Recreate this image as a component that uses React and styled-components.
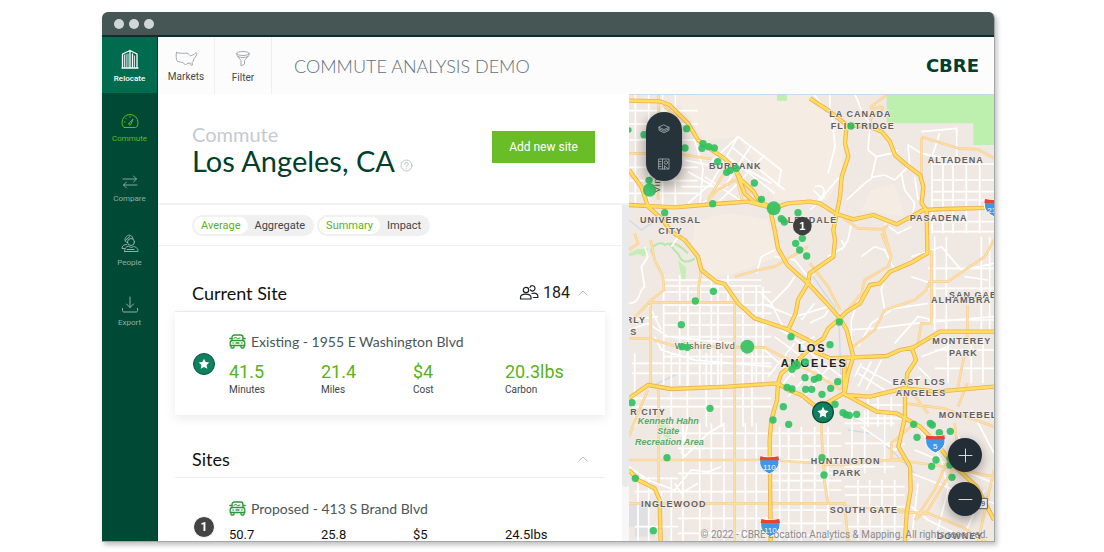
import React from "react";
import styled, { createGlobalStyle } from "styled-components";

const GlobalStyle = createGlobalStyle`
  * {
    box-sizing: border-box;
  }

  body {
    margin: 0;
    background-color: #fff;
    font-family: Roboto, "Liberation Sans", sans-serif;
    color: #3b464b;
  }

  button {
    font-family: inherit;
    border: none;
    padding: 0;
    cursor: pointer;
  }

  h1, h2, h3, p, dl, dd, dt {
    margin: 0;
    font-weight: 400;
  }
`;

const display = `Lato, "Open Sans", sans-serif`;

const Page = styled.div`
  height: 100vh;
  padding: 12px 109px 10px 102px;
`;

const Window = styled.div`
  height: 100%;
  display: flex;
  flex-direction: column;
  overflow: hidden;
  border-radius: 6px 6px 0 0;
  border-right: 1px solid #a3a7a7;
  border-bottom: 1px solid #a3a7a7;
  box-shadow: 2px 3px 5px rgba(0, 0, 0, 0.25);
`;

const TitleBar = styled.div`
  flex: none;
  height: 25px;
  display: flex;
  align-items: center;
  gap: 5px;
  padding: 0 12px;
  background-color: #455654;
  border-bottom: 2px solid #0c2e2c;
`;

const WindowDot = styled.span`
  width: 10px;
  height: 10px;
  border-radius: 50%;
  background-color: #d0d7da;
`;

const Body = styled.div`
  flex: 1;
  min-height: 0;
  display: flex;
`;

const Sidebar = styled.nav`
  flex: none;
  width: 56px;
  display: flex;
  flex-direction: column;
  gap: 5px;
  background-color: #004a35;
  border-right: 1px solid #003a2a;
`;

const SideLink = styled.a`
  height: 56px;
  display: flex;
  flex-direction: column;
  align-items: center;
  justify-content: center;
  gap: 4px;
  font-size: 8px;
  line-height: 12px;
  text-decoration: none;
  padding-top: ${(props) => (props.$tone === "solid" ? "4px" : "6px")};
  color: ${(props) =>
    ({ solid: "#fff", active: "#62bb1c" })[props.$tone] || "#8fb0a6"};
  background-color: ${(props) =>
    props.$tone === "solid" ? "#006b4e" : "transparent"};
  font-weight: ${(props) => (props.$tone === "solid" ? 500 : 400)};
`;

const Main = styled.div`
  flex: 1;
  min-width: 0;
  display: flex;
  flex-direction: column;
  background-color: #fff;
`;

const Header = styled.header`
  flex: none;
  height: 57px;
  display: flex;
  align-items: center;
  padding-right: 15px;
  background-color: #fcfcfc;
`;

const HeaderButton = styled.button`
  width: 57px;
  height: 100%;
  display: flex;
  flex-direction: column;
  align-items: center;
  justify-content: center;
  gap: 4px;
  padding-top: 3px;
  background: none;
  border-right: 1px solid #eeeff3;
  color: #3f484c;
  font-size: 10px;
  line-height: 12px;
`;

const AppTitle = styled.h1`
  flex: 1;
  margin-left: 22px;
  font-family: ${display};
  font-size: 18px;
  font-weight: 300;
  line-height: 24px;
  color: #5d707e;
`;

const Logo = styled.span`
  font-family: "DejaVu Sans", sans-serif;
  font-weight: 700;
  font-size: 18px;
  line-height: 20px;
  color: #003f2d;
`;

const Split = styled.div`
  flex: 1;
  min-height: 0;
  display: flex;
`;

const Panel = styled.section`
  flex: 471;
  min-width: 0;
  display: flex;
  flex-direction: column;
`;

const PanelHead = styled.div`
  flex: none;
  height: 111px;
  display: flex;
  align-items: center;
  justify-content: space-between;
  padding: 0 34px;
  border-bottom: 2px solid #f2f2f6;
`;

const Eyebrow = styled.p`
  font-family: ${display};
  font-size: 20px;
  line-height: 24px;
  color: #c5cacf;
`;

const City = styled.h2`
  display: flex;
  align-items: flex-end;
  gap: 5px;
  font-family: ${display};
  font-size: 29px;
  line-height: 30px;
  color: #003f2d;
`;

const HelpButton = styled.button`
  height: 20px;
  background: none;
  color: #bcc2c6;
  line-height: 0;
`;

const AddButton = styled.button`
  width: 103px;
  height: 32px;
  margin-bottom: 3px;
  background-color: #69be28;
  color: #fff;
  font-size: 12px;
`;

const ScrollArea = styled.div`
  flex: 1;
  min-height: 0;
  display: flex;
`;

const List = styled.div`
  flex: 1;
  min-width: 0;
  overflow: hidden;
`;

const ScrollTrack = styled.div`
  width: 7px;
  background-color: #f7f7f8;
`;

const ScrollThumb = styled.div`
  height: 84%;
  border-radius: 0 0 4px 4px;
  background-color: #e8eaec;
`;

const Toggles = styled.div`
  height: 41px;
  display: flex;
  align-items: center;
  gap: 3px;
  padding: 0 34px;
  border-bottom: 1px solid #f0f1f5;
`;

const ToggleGroup = styled.div`
  height: 21px;
  display: flex;
  padding: 2px;
  border-radius: 11px;
  background-color: #f0f0f0;
`;

const Toggle = styled.button`
  padding: 0 7px;
  border-radius: 9px;
  font-size: 11px;
  background-color: ${(props) => (props.$on ? "#fff" : "transparent")};
  color: ${(props) => (props.$on ? "#58b31a" : "#3b464b")};
`;

const SiteGroup = styled.section`
  padding: 0 17px;
  margin-top: ${(props) => props.$top}px;
`;

const GroupHead = styled.div`
  height: 38px;
  display: flex;
  align-items: center;
  padding: 0 17px;
  border-bottom: 1px solid #eceef4;
`;

const GroupTitle = styled.h3`
  flex: 1;
  font-family: ${display};
  font-size: 18px;
  line-height: 24px;
  color: #111;
`;

const Count = styled.span`
  display: flex;
  align-items: center;
  gap: 4px;
  margin-right: 8px;
  font-size: 16px;
  line-height: 24px;
  color: #1c2123;
`;

const CollapseButton = styled.button`
  background: none;
  color: #b4bac0;
  line-height: 0;
`;

const SiteCard = styled.article`
  height: ${(props) => (props.$raised ? 103 : 97)}px;
  display: flex;
  align-items: center;
  gap: 14px;
  padding-left: 18px;
  background-color: #fff;
  box-shadow: ${(props) =>
    props.$raised ? "0 3px 10px rgba(40, 50, 60, 0.1)" : "none"};
`;

const Badge = styled.span`
  flex: none;
  width: 22px;
  height: 22px;
  display: flex;
  align-items: center;
  justify-content: center;
  border-radius: 50%;
  font-size: 12px;
  font-weight: 700;
  color: #fff;
  border: 1px solid ${(props) => (props.$star ? "#07563f" : "#fff")};
  background-color: ${(props) => (props.$star ? "#0f8060" : "#444")};
`;

const SiteInfo = styled.div`
  flex: 1;
`;

const SiteName = styled.p`
  display: flex;
  align-items: center;
  gap: 5px;
  font-family: ${display};
  font-size: 14px;
  line-height: 20px;
  color: #4a565c;
`;

const Stats = styled.dl`
  display: grid;
  grid-template-columns: repeat(4, 92px);
  margin-top: 8px;
`;

const Stat = styled.div`
  display: flex;
  flex-direction: column-reverse;
`;

const StatValue = styled.dd`
  font-size: ${(props) => (props.$raised ? 18 : 13)}px;
  line-height: ${(props) => (props.$raised ? 24 : 16)}px;
  color: ${(props) => (props.$raised ? "#58b31a" : "#111")};
`;

const StatLabel = styled.dt`
  font-size: 10px;
  line-height: 12px;
`;

const MapPanel = styled.section`
  flex: 365;
  min-width: 0;
  position: relative;
  overflow: hidden;
  background-color: #f0e8e2;
`;

const MapSvg = styled.svg`
  display: block;
  width: 100%;
  height: 100%;
  font-family: "Liberation Sans", Arial, sans-serif;
`;

const LayerPill = styled.div`
  position: absolute;
  top: 18px;
  left: 17px;
  width: 36px;
  height: 69px;
  display: flex;
  flex-direction: column;
  border-radius: 18px;
  background-color: #26333a;
  box-shadow: 0 5px 14px rgba(0, 0, 0, 0.4);
`;

const LayerButton = styled.button`
  flex: 1;
  background: none;
  color: #98a2a7;
  line-height: 0;
`;

const ZoomControls = styled.div`
  position: absolute;
  right: 12px;
  bottom: 25px;
  display: flex;
  flex-direction: column;
  gap: 10px;
`;

const ZoomButton = styled.button`
  width: 34px;
  height: 34px;
  border-radius: 50%;
  background-color: #222d35;
  color: #d6dadc;
  line-height: 0;
  box-shadow: 0 4px 12px rgba(0, 0, 0, 0.35);
`;

const Attribution = styled.p`
  position: absolute;
  right: 6px;
  bottom: 0;
  font-size: 10px;
  line-height: 12px;
  white-space: nowrap;
  color: #8a8b94;
`;

const Icon = ({ w, h, children, ...rest }) => (
  <svg
    width={w}
    height={h}
    viewBox={`0 0 ${w} ${h}`}
    fill="none"
    stroke="currentColor"
    strokeLinecap="round"
    strokeLinejoin="round"
    aria-hidden="true"
    {...rest}
  >
    {children}
  </svg>
);

const BuildingIcon = () => (
  <Icon w={18} h={20}>
    <path d="M1.500 19V5L9 1.500V19M9 1.500l7 3.500V19M11.500 5v14M1 19h16" strokeWidth="1.300" />
    <path d="M3.500 6v12M5.200 5.500v12.500M7 5v13M13.500 7v11" strokeWidth=".8" />
  </Icon>
);

const GaugeIcon = () => (
  <Icon w={18} h={16}>
    <path d="M3.500 14.500h11c1.500 0 2.500-2.500 2.500-5a8 8 0 0 0-16 0c0 2.500 1 5 2.500 5zM8 10.500l4-4.500-2.200 5.500c-.8 1.200-2.600.2-1.800-1zM3.500 9h.6M5 5.500l.4.400M9 3.500v.6" />
  </Icon>
);

const CompareIcon = () => (
  <Icon w={16} h={14}>
    <path d="M1 4h13.500M11.500 1l3 3-3 3M15 10H1.500M4.500 7l-3 3 3 3" strokeWidth=".9" />
  </Icon>
);

const PeopleIcon = () => (
  <Icon w={18} h={19}>
    <circle cx="10" cy="8" r="3.500" />
    <path d="M6.300 8.500C3.500 8 3.500 5 5 3c1.500-2 4.500-2.500 6-.5l1 2.300M4.200 6.500L9 2.500M5.500 10.500C2.500 10.500 1 12 1 14.500h2.500M3.500 17.500h13.500c.3-2-1-4.500-4.500-5-2 1.500-4 1-5-.5-2.500.5-4 2.500-4 5.500zM6 15.500h7" />
  </Icon>
);

const ExportIcon = () => (
  <Icon w={18} h={17}>
    <path d="M9 1v10.500M5.500 8L9 11.500 12.500 8M1.500 12.500v2c0 1 .5 1.500 1.500 1.500h12c1 0 1.500-.5 1.500-1.500v-2" />
  </Icon>
);

const MarketsIcon = () => (
  <Icon w={23} h={16} stroke="#a3a9ae">
    <path d="M1.500 1.500C4 2.500 9 2.500 12 2l2 1.500 1.500 1.500 2-1 1.500-.500 2-2 1 1-1 2.500-2 2.500-.5 2.500-1.500 1.500.5 2.500-1 .5-1.500-2.500-3 .5-1.500 1.500-2-2-3-1-3-.5C1.500 9 .5 5 1.500 1.500z" />
  </Icon>
);

const FilterIcon = () => (
  <Icon w={16} h={18} stroke="#a3a9ae">
    <ellipse cx="8" cy="3.500" rx="6.300" ry="2" />
    <path d="M1.700 3.500l.3 2 4 5v5.500l3.500-2v-3.500l4.300-5 .5-2M3 6.500c3 1.500 7 1.500 10 0" />
  </Icon>
);

const HelpIcon = () => (
  <Icon w={13} h={13}>
    <circle cx="6.500" cy="6.500" r="5.500" />
    <path d="M4.700 5.200c0-2.600 3.800-2.300 3.600 0C8.200 6.500 6.500 6.500 6.500 8M6.500 9.700v.1" />
  </Icon>
);

const CountIcon = () => (
  <Icon w={20} h={17} strokeWidth="1.200">
    <circle cx="7" cy="6" r="2.700" />
    <path d="M1.500 15v-1.500c0-4.500 10.500-4.500 10.500 0V15zM11 3.500c.5-2.500 5-2.500 5 .8 0 3-3 3.500-4.500 1.700M13 9.500c3.500-1 5.800.5 5.800 2.500V13.500h-4.500" />
  </Icon>
);

const ChevronIcon = () => (
  <Icon w={10} h={6}>
    <path d="M.8 5L5 1l4.200 4" />
  </Icon>
);

const CarIcon = () => (
  <Icon w={17} h={15} stroke="#2c9a36" strokeWidth="1.300">
    <path d="M3 6.500V3.500C3 2 4 1 5.500 1h6C13 1 14 2 14 3.500v3" />
    <path d="M3.500 6.500h10c1.500 0 2.300.8 2.300 2.300V11.500H1.200V8.800c0-1.500.8-2.300 2.300-2.300z" />
    <path d="M2 11.500v1.700c0 .5.300.8.800.8h1.400c.5 0 .8-.3.800-.8V11.500M12 11.500v1.700c0 .5.300.8.800.8h1.400c.5 0 .8-.3.800-.8V11.500M.8 4.500H3M14 4.500h2.200M7 9h3M4 9h.3M12.700 9h.3" />
    <path d="M5 4.200l2-.7 1.500 1.200L11 4" strokeWidth="1" />
  </Icon>
);

const StarIcon = () => (
  <Icon w={12} h={12} fill="#fff" stroke="none">
    <path d="M6 .8l1.600 3.300 3.700.5-2.700 2.500.7 3.700L6 9l-3.300 1.800.7-3.700L.7 4.600l3.700-.5z" />
  </Icon>
);

const LayersIcon = () => (
  <Icon w={12} h={10} strokeWidth=".9">
    <path d="M6 1l5 2.300L6 5.600 1 3.300zM1 3.300v3L6 8.800l5-2.500v-3M1.500 5L6 7.200 10.500 5" />
  </Icon>
);

const LegendIcon = () => (
  <Icon w={12} h={12} strokeWidth=".9">
    <path d="M1 1h10v10H1zM4.500 1v10M1 3.500h2M1 6h2M1 8.500h2M6.500 8l4 3M6.500 11v-3" />
    <circle cx="8" cy="4.500" r="1.700" />
  </Icon>
);

const PlusIcon = () => (
  <Icon w={15} h={15}>
    <path d="M7.500 1v13M1 7.500h13" />
  </Icon>
);

const MinusIcon = () => (
  <Icon w={15} h={3}>
    <path d="M1 1.500h13" />
  </Icon>
);

// Street grids, one entry per district: x range, y range, verticals, horizontals
const grids = [
  [3, 210, 12, 350, [22, 62, 104, 142], [62, 102, 150, 232, 272, 310]],
  [104, 430, 590, 885, [107, 155, 180, 215, 250, 270, 345, 385, 405], [606, 645, 670, 705, 740, 800]],
  [107, 400, 555, 640, [107, 155, 250, 300], [588, 570]],
  [12, 430, 790, 1010, [20, 130, 178, 235, 280, 345, 372], [820, 850, 925, 950]],
  [150, 420, 1000, 1353, [165, 215, 250, 288, 352, 385], [1030, 1075, 1110, 1150, 1205, 1240, 1285, 1330]],
  [430, 640, 1010, 1353, [455, 482, 520, 560, 600], [1030, 1068, 1110, 1150, 1172, 1200, 1260, 1300, 1335]],
  [650, 830, 1170, 1353, [690, 725, 762, 800], [1190, 1215, 1250, 1310]],
  [912, 1098, 200, 430, [912, 945, 975, 1015, 1055], [222, 270, 305, 330, 395, 425]],
  [900, 1098, 440, 720, [920, 955, 1060, 1085], [535, 595, 690]],
  [920, 1098, 740, 880, [960, 1030, 1065], [780, 835]],
  [650, 800, 960, 1150, [672, 710, 770], [1000, 1060, 1130]],
  [700, 830, 920, 1010, [720, 750, 790], [945, 985]],
  [20, 150, 1160, 1353, [30, 62, 130], [1165, 1205, 1310]],
];

const gridPath = grids
  .map(([x1, x2, y1, y2, xs, ys]) =>
    [
      ...xs.map((x) => `M${x} ${y1}V${y2}`),
      ...ys.map((y) => `M${x1} ${y}H${x2}`),
    ].join("")
  )
  .join("");

const streets = [
  "M180 340L250 280 330 140 M210 350L290 290 370 165 M255 350L320 290 410 195 M240 225L330 140 460 240 450 290 M270 190L430 280 M230 260L350 340 M310 170L470 300 M300 200L440 310",
  "M170 210L240 225 M180 245L260 290 M160 290H300 M200 150L225 235 215 350",
  "M556 12L612 80 621 170 600 250 M606 12V60 M556 300L580 325 626 270 650 250 M546 360L590 320 M560 290C590 280 600 310 570 330",
  "M656 330L710 280 730 265 745 200 720 180 725 120 M730 262L770 255 800 270 840 230 M745 200L790 190 810 180 M820 250L830 300 860 340 850 390 M845 225L840 165 880 190 1000 215 M880 125L986 115V200 M935 130L912 200",
  "M680 12C700 50 700 80 730 100 M860 260L870 330 M770 400L810 430 850 410 M670 400L660 450 640 480",
  "M3 640C40 640 30 600 50 590L40 530 60 500 50 470 M130 470L150 440 175 450 M60 640L100 720 M3 720L60 700 120 740 320 760 M3 690L90 680 M80 740L100 780 200 810 430 830",
  "M385 550L400 500 440 480 M400 610L430 640 470 720 M430 640L480 590 500 560 M440 500L500 510 540 560 M560 640L520 690 M600 500L650 470 640 450 M546 700C570 680 590 690 600 660",
  "M400 640L500 680 600 650 M430 700L520 760 560 740 M410 780L500 860 M440 740L520 800 600 870 M470 720L560 800 640 860 M420 860L500 760 M450 900L540 790 M480 920L590 800 M520 930L620 810",
  "M700 500L740 470 770 480 800 540 M700 600L670 690V760 M790 660L730 700 690 770 M770 560L760 600 770 660 900 640 M650 720L740 715 860 700 1098 680 M800 760L870 680 920 690",
  "M700 820L680 860 M700 830L790 880 M730 815L690 890 M760 810L715 900 M690 850L770 900 M880 800L960 770 M870 830L920 880 M880 860L830 880",
  "M850 560L910 580 M850 500L940 470 1000 540 1098 520 M1010 560L1080 570",
  "M160 1080L170 1100 240 1030 290 1000 M3 1130L60 1170 140 1200 190 1140 240 1145 280 1130 M140 1180L160 1210 210 1180 M100 1210V1353 M180 1000L160 1090",
  "M860 1080L1098 1180 M850 1150L980 1200 1098 1240 M870 1010L940 1110 960 1200 920 1353 M980 1020L1040 1130 M1030 960L1098 1090 M850 1250L900 1290 1000 1340 M700 1010L800 1080 830 1060 M870 1180L850 1353 M640 960L720 1000 M1000 1353L1070 1200",
];

const arterials = [
  "M3 190H140L250 207 M92 12V60L90 330 M104 45L150 85",
  "M300 230L240 330 270 300 320 270 370 310 M330 280L345 340",
  "M68 450L80 510 105 560 108 600 70 630 3 700 M68 630V885 M68 637H320V1353 M320 560L390 540 440 530 540 470 M212 640V590L220 540",
  "M3 745H60L140 768 410 772 560 850 640 900 M3 480L30 460 20 430",
  "M3 1110H430L640 1125 830 1105 M3 1240H640 M92 885V1180 M3 1040L25 980 60 900",
  "M580 930V1020L590 1180 600 1240 650 1240 660 1353 M650 1250L830 1260 M800 1265L900 1270 1000 1310 1098 1370",
  "M776 12C760 30 740 40 730 50 725 70 760 40 765 55 760 75 735 60 728 90V110",
  "M880 145V270 M880 140L990 175 1050 178 1098 205 M646 385L690 415 766 418 780 405 M766 418L790 500",
  "M546 520L600 590 636 660 M660 660L700 610 710 570 780 530 790 500 760 430",
  "M676 770L740 720 770 660 860 630 895 600 905 575 960 575 1070 500 1098 450 M870 760L880 700 910 700 M910 480V700",
  "M1018 645V750 M1018 880L990 950 M1098 820 M1008 800L990 890 M846 900L900 970",
  "M830 940L946 955 1098 1010 M690 1115L800 1110 920 1125 1098 1160 M790 1105L790 1060 860 1000 M980 1000L990 1080 M860 1290L920 1200 960 1110 990 1060 M1098 1140L1050 1353",
  "M985 1120L900 1260 860 1290",
];

const highways = [
  "M3 32L95 34 125 45 180 100 210 150 255 182 290 206 322 238 340 270 375 302 395 335 437 355 430 375 440 420 450 475 478 525 540 580 596 640 636 685 656 720 676 800 660 850 649 915",
  "M322 238L350 310 380 337 437 355",
  "M3 345L140 352 260 342 360 335 437 355 480 340 546 335 576 340 626 372 676 388 736 375 806 403 886 360 946 357 1098 353",
  "M3 240L40 290 60 350 100 385 130 425 170 450 210 500 220 540 265 575 290 582 330 640 380 685 470 715 540 750 560 762 586 745 601 715 636 685",
  "M480 720L503 670 510 630 540 580 545 550 616 500 621 450 616 420 626 370 636 320 641 260 661 200 651 160 656 105",
  "M546 25L606 65 656 105 726 110 761 125 786 155 801 195 836 225 876 255 886 290 881 340 896 360 898 490 846 520 786 545 756 580 726 585 696 640 656 665 636 685",
  "M1098 725H936L856 772 816 780 776 798 676 802 606 805 560 785",
  "M851 772L864 810 838 850 831 920V980L811 1070 846 1130 848 1200 836 1270 831 1353",
  "M649 915L726 920 826 895 926 905 1098 890",
  "M3 925L60 885 130 897 300 890 450 880 480 900 520 915 570 955 646 910 746 965 806 970 876 1010 926 1060 976 1125 1046 1190 1098 1290",
  "M560 762L500 820 460 850 450 880 447 930 430 990 425 1050 428 1353",
  "M3 1140L30 1170 80 1195 95 1230 98 1353",
  "M649 800V910",
];

// x, y, radius
const dots = [
  [3, 120, 8], [48, 134], [176, 116], [171, 174], [225, 161], [222, 175],
  [242, 170], [259, 174], [269, 215], [296, 247], [307, 241], [325, 235],
  [63, 271], [65, 300, 20], [254, 341], [110, 368], [379, 279], [400, 328],
  [437, 355, 21], [460, 386], [469, 396], [510, 368], [523, 445], [503, 460],
  [515, 480], [536, 498], [669, 108], [256, 604], [202, 633], [160, 704],
  [162, 770], [178, 772], [358, 770, 21], [489, 740], [505, 825, 14],
  [492, 838], [532, 816], [531, 863], [559, 868], [477, 892], [492, 897],
  [533, 898], [551, 898], [634, 696], [606, 764], [572, 863], [629, 875],
  [608, 895], [582, 913], [12, 938], [246, 955], [466, 950], [435, 990],
  [482, 1003], [117, 1103], [22, 1165], [76, 1322], [621, 943], [645, 968],
  [654, 974], [664, 976], [686, 973], [857, 1003], [907, 1000], [913, 1005],
  [934, 1028], [967, 1024], [867, 1042], [924, 1110], [911, 1129],
  [582, 1103], [588, 1155], [972, 1162], [966, 1105], [966, 1125],
];

const labels = [
  [604, 82, "LA CANADA"],
  [608, 117, "FLINTRIDGE"],
  [243, 236, "BURBANK"],
  [899, 218, "ALTADENA"],
  [845, 394, "PASADENA"],
  [455, 400, "GLENDALE"],
  [36, 400, "UNIVERSAL"],
  [91, 431, "CITY"],
  [963, 625, "SAN GABRIEL"],
  [909, 639, "ALHAMBRA"],
  [913, 762, "MONTEREY"],
  [963, 797, "PARK"],
  [794, 885, "EAST LOS"],
  [803, 919, "ANGELES"],
  [932, 983, "MONTEBELLO"],
  [548, 1123, "HUNTINGTON"],
  [614, 1157, "PARK"],
  [605, 1270, "SOUTH GATE"],
  [926, 1346, "DOWNEY"],
  [39, 1250, "INGLEWOOD"],
  [-92, 700, "BEVERLY"],
  [-65, 734, "HILLS"],
  [-98, 975, "CULVER CITY"],
];

const Shield = ({ x, y, children }) => (
  <g transform={`translate(${x} ${y})`}>
    <path
      d="M-26 -26Q0 -20 26 -26C32 -8 32 12 0 27 -32 12 -32 -8 -26 -26z"
      fill="#3f97e8"
      stroke="#fff"
      strokeWidth="3"
    />
    <path d="M-27 -26Q0 -20 27 -26L29 -14H-29z" fill="#e8432f" />
    <text y="15" textAnchor="middle" fontSize="24" fill="#fff">
      {children}
    </text>
  </g>
);

const CityMap = () => (
  <MapSvg
    viewBox="3 12 1095 1341"
    preserveAspectRatio="xMidYMid slice"
    role="img"
    aria-label="Map of Los Angeles commutes"
  >
    <path d="M130 12H546L600 60 650 110 640 250 600 330 437 330 400 250 330 140 230 150z" fill="#f5ece3" />
    <path d="M200 400C300 350 360 380 420 390L450 500 320 550 250 560 190 470z" fill="#f5ece3" />
    <path d="M730 300L800 280 830 380 700 360z" fill="#f5ece3" />
    <path d="M776 12H1098V165H1036V100H776zM447 12H477V32H447z" fill="#bdf0ae" />
    <path d="M3 490L30 478 60 475 50 500 30 492 3 500zM150 510L175 535 172 570 162 570zM85 1000L120 1010 130 1050 110 1040z" fill="#c4efb4" />
    <path
      d="M72 490C60 470 100 450 110 465 130 450 130 480 150 490 160 520 180 520 200 505M130 470C120 450 150 460 180 490"
      fill="none"
      stroke="#b4e8a6"
      strokeWidth="6"
    />
    <path d="M3 1240H60V1310H3zM20 1310H80V1340H20z" fill="#e0e0e3" />
    <path
      d="M556 560L590 610 620 650 634 720 640 900M660 1020L730 1030 800 1090 860 1150M70 890L150 850M3 390L40 420 70 400"
      fill="none"
      stroke="#c6dcee"
      strokeWidth="4"
    />
    <g fill="none" strokeLinejoin="round">
      <path d={gridPath + streets.join("")} stroke="#fff" strokeWidth="5" />
      <path d={arterials.join("")} stroke="#f8cf92" strokeWidth="8" />
      <path d={arterials.join("")} stroke="#fde0a6" strokeWidth="4" />
      <path d={highways.join("")} stroke="#efad57" strokeWidth="13" />
      <path d={highways.join("")} stroke="#ffdf5a" strokeWidth="8" />
    </g>
    <path d="M3 13H1098" stroke="#b9d9ee" strokeWidth="3" />
    <g
      fontSize="27"
      fontWeight="700"
      letterSpacing="3"
      fill="#62605f"
      stroke="#f5efea"
      strokeWidth="4"
      paintOrder="stroke"
    >
      {labels.map(([x, y, text]) => (
        <text key={`${text}${y}`} x={x} y={y}>
          {text}
        </text>
      ))}
      <g fontSize="33" letterSpacing="6" fill="#222">
        <text x="510" y="786">LOS</text>
        <text x="458" y="831">ANGELES</text>
      </g>
      <g fontSize="27" fontStyle="italic" letterSpacing="0" textAnchor="middle" fill="#5aa865">
        <text x="121" y="1002">Kenneth Hahn</text>
        <text x="121" y="1033">State</text>
        <text x="124" y="1064">Recreation Area</text>
      </g>
      <g fontSize="27" letterSpacing="2" fontWeight="400" fill="#5f5a44">
        <text x="140" y="776">Wilshire Blvd</text>
        <text transform="translate(96 308) rotate(-90)">Vine</text>
      </g>
    </g>
    <g fill="#2fc161" fillOpacity=".9">
      {dots.map(([x, y, r = 11]) => (
        <circle key={`${x}-${y}`} cx={x} cy={y} r={r} />
      ))}
    </g>
    <Shield x={424} y={1125}>110</Shield>
    <Shield x={427} y={1313}>110</Shield>
    <Shield x={922} y={1062}>5</Shield>
    <Shield x={1098} y={353}>210</Shield>
    <path d="M1050 1225H1078V1256H1050z" fill="#fff" stroke="#666" strokeWidth="3" />
    <text x="1060" y="1249" fontSize="21" fill="#444">9</text>
    <circle cx="523" cy="408" r="28" fill="#3f3f3f" />
    <text x="523" y="420" textAnchor="middle" fontSize="33" fontWeight="700" fill="#fff">1</text>
    <circle cx="585" cy="967" r="31" fill="#0f8060" stroke="#0a4d39" strokeWidth="4" />
    <path
      d="M585 950l5 11 12 2-9 8 2 12-10-6-10 6 2-12-9-8 12-2z"
      fill="#fff"
    />
  </MapSvg>
);

const navItems = [
  { label: "Relocate", icon: BuildingIcon, tone: "solid" },
  { label: "Commute", icon: GaugeIcon, tone: "active" },
  { label: "Compare", icon: CompareIcon },
  { label: "People", icon: PeopleIcon },
  { label: "Export", icon: ExportIcon },
];

const Site = ({ raised, badge, name, values }) => (
  <SiteCard $raised={raised}>
    <Badge $star={raised}>{badge}</Badge>
    <SiteInfo>
      <SiteName>
        <CarIcon />
        {name}
      </SiteName>
      <Stats>
        {["Minutes", "Miles", "Cost", "Carbon"].map((label, i) => (
          <Stat key={label}>
            <StatLabel>{label}</StatLabel>
            <StatValue $raised={raised}>{values[i]}</StatValue>
          </Stat>
        ))}
      </Stats>
    </SiteInfo>
  </SiteCard>
);

const App = () => {
  return (
    <Page>
      <GlobalStyle />
      <Window>
        <TitleBar>
          <WindowDot />
          <WindowDot />
          <WindowDot />
        </TitleBar>
        <Body>
          <Sidebar>
            {navItems.map(({ label, icon: NavIcon, tone }) => (
              <SideLink key={label} href={`#${label.toLowerCase()}`} $tone={tone}>
                <NavIcon />
                {label}
              </SideLink>
            ))}
          </Sidebar>
          <Main>
            <Header>
              <HeaderButton>
                <MarketsIcon />
                Markets
              </HeaderButton>
              <HeaderButton>
                <FilterIcon />
                Filter
              </HeaderButton>
              <AppTitle>COMMUTE ANALYSIS DEMO</AppTitle>
              <Logo>CBRE</Logo>
            </Header>
            <Split>
              <Panel>
                <PanelHead>
                  <div>
                    <Eyebrow>Commute</Eyebrow>
                    <City>
                      Los Angeles, CA
                      <HelpButton aria-label="Help">
                        <HelpIcon />
                      </HelpButton>
                    </City>
                  </div>
                  <AddButton>Add new site</AddButton>
                </PanelHead>
                <ScrollArea>
                  <List>
                    <Toggles>
                      <ToggleGroup>
                        <Toggle $on>Average</Toggle>
                        <Toggle>Aggregate</Toggle>
                      </ToggleGroup>
                      <ToggleGroup>
                        <Toggle $on>Summary</Toggle>
                        <Toggle>Impact</Toggle>
                      </ToggleGroup>
                    </Toggles>
                    <SiteGroup $top={28}>
                      <GroupHead>
                        <GroupTitle>Current Site</GroupTitle>
                        <Count>
                          <CountIcon />
                          184
                        </Count>
                        <CollapseButton aria-label="Collapse current site">
                          <ChevronIcon />
                        </CollapseButton>
                      </GroupHead>
                      <Site
                        raised
                        badge={<StarIcon />}
                        name="Existing - 1955 E Washington Blvd"
                        values={["41.5", "21.4", "$4", "20.3lbs"]}
                      />
                    </SiteGroup>
                    <SiteGroup $top={25}>
                      <GroupHead>
                        <GroupTitle>Sites</GroupTitle>
                        <CollapseButton aria-label="Collapse sites">
                          <ChevronIcon />
                        </CollapseButton>
                      </GroupHead>
                      <Site
                        badge="1"
                        name="Proposed - 413 S Brand Blvd"
                        values={["50.7", "25.8", "$5", "24.5lbs"]}
                      />
                    </SiteGroup>
                  </List>
                  <ScrollTrack>
                    <ScrollThumb />
                  </ScrollTrack>
                </ScrollArea>
              </Panel>
              <MapPanel>
                <CityMap />
                <LayerPill>
                  <LayerButton aria-label="Layers">
                    <LayersIcon />
                  </LayerButton>
                  <LayerButton aria-label="Legend">
                    <LegendIcon />
                  </LayerButton>
                </LayerPill>
                <ZoomControls>
                  <ZoomButton aria-label="Zoom in">
                    <PlusIcon />
                  </ZoomButton>
                  <ZoomButton aria-label="Zoom out">
                    <MinusIcon />
                  </ZoomButton>
                </ZoomControls>
                <Attribution>
                  © 2022 - CBRE Location Analytics & Mapping. All rights reserved.
                </Attribution>
              </MapPanel>
            </Split>
          </Main>
        </Body>
      </Window>
    </Page>
  );
};

export default App;
